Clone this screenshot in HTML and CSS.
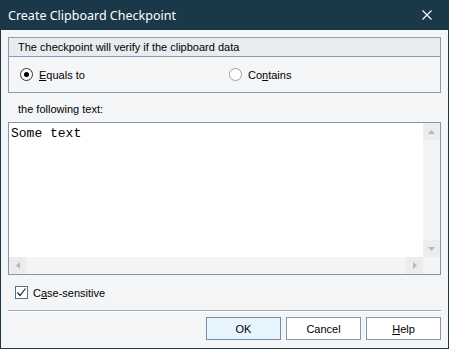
FILE: index.html
```html
<!DOCTYPE html>
<html lang="en">
<head>
    <meta charset="UTF-8">
    <title>Create Clipboard Checkpoint</title>
    <link rel="stylesheet" href="styles.css">
</head>
<body>

    <div class="window">
        <!-- Title bar -->
        <div class="titlebar">
            <span class="title">Create Clipboard Checkpoint</span>
            <svg class="close" width="10" height="10" viewBox="0 0 10 10">
                <path d="M0.5 0.5 L9.5 9.5 M9.5 0.5 L0.5 9.5" stroke="#fff" stroke-width="1.2" fill="none"/>
            </svg>
        </div>

        <div class="content">
            <!-- Compare mode -->
            <div class="group">
                <div class="group-header">The checkpoint will verify if the clipboard data</div>
                <div class="group-body">
                    <label class="radio checked"><span class="dot"></span><u>E</u>quals to</label>
                    <label class="radio"><span class="dot"></span>Co<u>n</u>tains</label>
                </div>
            </div>

            <div class="caption">the following text:</div>

            <!-- Text box with scrollbars -->
            <div class="textbox">
                <div class="text">Some text</div>
                <div class="vscroll">
                    <div class="arrow"><svg width="7" height="4" viewBox="0 0 7 4"><path d="M0 4 L3.5 0 L7 4 Z" fill="#b8b8b8"/></svg></div>
                    <div class="arrow"><svg width="7" height="4" viewBox="0 0 7 4"><path d="M0 0 L3.5 4 L7 0 Z" fill="#b8b8b8"/></svg></div>
                </div>
                <div class="hscroll">
                    <div class="arrow"><svg width="4" height="7" viewBox="0 0 4 7"><path d="M4 0 L0 3.5 L4 7 Z" fill="#b8b8b8"/></svg></div>
                    <div class="arrow"><svg width="4" height="7" viewBox="0 0 4 7"><path d="M0 0 L4 3.5 L0 7 Z" fill="#b8b8b8"/></svg></div>
                </div>
                <div class="corner"></div>
            </div>

            <label class="checkbox">
                <span class="box"><svg width="11" height="11" viewBox="0 0 11 11"><path d="M1.5 5.5 L4 8.5 L9.5 1.5" stroke="#222" stroke-width="1.2" fill="none"/></svg></span>
                C<u>a</u>se-sensitive
            </label>

            <div class="separator"></div>

            <div class="buttons">
                <button class="btn default">OK</button>
                <button class="btn">Cancel</button>
                <button class="btn"><u>H</u>elp</button>
            </div>
        </div>
    </div>

</body>
</html>
```

FILE: styles.css
```css
body {
    margin: 0;
    padding: 0;
    font-family: "Liberation Sans", Arial, sans-serif;
    font-size: 11px;
    color: #000;
    background: #f4f5f7;
}
.window {
    width: 447px;
    height: 348px;
    border: 1px solid #1b3849;
    border-top: none;
    background: #f4f5f7;
    display: flex;
    flex-direction: column;
}
.titlebar {
    height: 30px;
    flex-shrink: 0;
    background: #1b3849;
    color: #fff;
    display: flex;
    align-items: center;
    justify-content: space-between;
    padding: 0 17px 0 8px;
    margin: 0 -1px;
}
.title {
    font-family: "Noto Sans", sans-serif;
    font-size: 12.5px;
}
.content {
    flex: 1;
    display: flex;
    flex-direction: column;
    padding: 7px 7px 8px 7px;
}
.group {
    border: 1px solid #8d9bb0;
}
.group-header {
    height: 18px;
    line-height: 18px;
    padding-left: 9px;
    background: #e8ebf0;
    border-bottom: 1px solid #8d9bb0;
}
.group-body {
    height: 35px;
    display: flex;
    align-items: center;
    padding-left: 11px;
}
.radio {
    display: flex;
    align-items: center;
    width: 209px;
}
.radio .dot {
    width: 11px;
    height: 11px;
    border: 1px solid #9aa0a8;
    border-radius: 50%;
    background: #fff;
    margin-right: 6px;
    display: flex;
    align-items: center;
    justify-content: center;
}
.radio.checked .dot {
    border-color: #333;
}
.radio.checked .dot::after {
    content: "";
    width: 5px;
    height: 5px;
    border-radius: 50%;
    background: #000;
}
.caption {
    padding: 10px 0 0 10px;
    height: 19px;
}
.textbox {
    height: 151px;
    flex-shrink: 0;
    border: 1px solid #8596ab;
    background: #fff;
    display: grid;
    grid-template-columns: 1fr 17px;
    grid-template-rows: 1fr 17px;
}
.text {
    font-family: "Liberation Mono", "Courier New", monospace;
    font-size: 13px;
    padding: 3px 2px;
}
.vscroll {
    background: #f3f4f6;
    display: flex;
    flex-direction: column;
    justify-content: space-between;
}
.vscroll .arrow {
    height: 17px;
    background: #ececee;
    display: flex;
    align-items: center;
    justify-content: center;
}
.hscroll {
    background: #f3f4f6;
    display: flex;
    justify-content: space-between;
}
.hscroll .arrow {
    width: 17px;
    background: #ececee;
    display: flex;
    align-items: center;
    justify-content: center;
}
.corner {
    background: #f3f4f6;
}
.checkbox {
    display: flex;
    align-items: center;
    margin: 11px 0 0 7px;
    height: 13px;
}
.checkbox .box {
    width: 11px;
    height: 11px;
    border: 1px solid #5c6b80;
    background: #fff;
    margin-right: 5px;
    display: flex;
}
.separator {
    margin-top: 11px;
    border-top: 1px solid #a0a8b4;
    border-bottom: 1px solid #fff;
}
.buttons {
    margin-top: 5px;
    display: flex;
    justify-content: flex-end;
    gap: 5px;
}
.btn {
    width: 75px;
    height: 23px;
    font-family: "Liberation Sans", Arial, sans-serif;
    font-size: 11px;
    color: #000;
    background: #fff;
    border: 1px solid #8a97a8;
    padding: 0;
}
.btn.default {
    background: #e6f5fd;
    border-color: #7a8ca4;
}
```
